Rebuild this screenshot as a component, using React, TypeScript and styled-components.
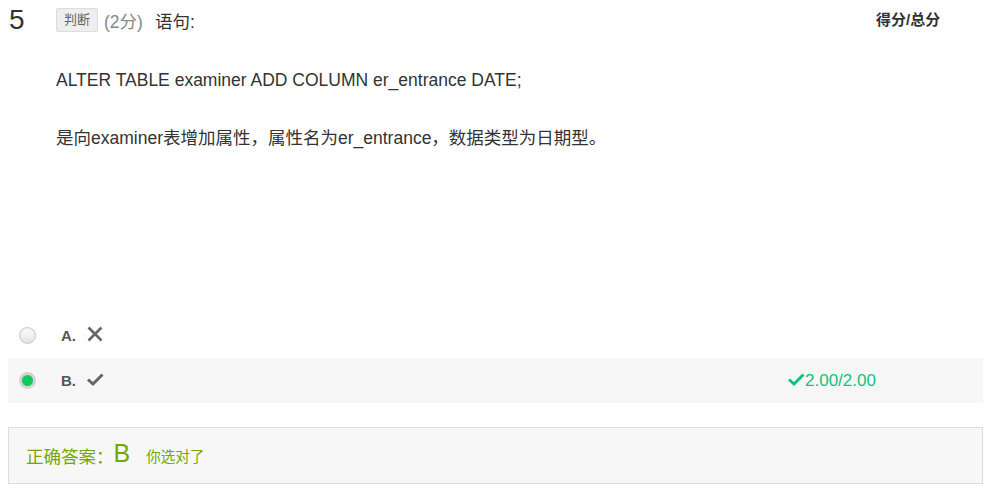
import styled, { createGlobalStyle } from 'styled-components'

const GlobalStyle = createGlobalStyle`
  body {
    margin: 0;
    background: #fff;
    font-family: "Liberation Sans", Arial, "Noto Sans CJK SC", sans-serif;
    color: #333;
  }
`

const Pagina = styled.div`
  width: 993px;
  padding: 0 10px 0 8px;
  box-sizing: border-box;
`

const Cabecalho = styled.div`
  display: flex;
  align-items: flex-start;
  height: 68px;
  padding-top: 4px;
  box-sizing: border-box;
`

const Numero = styled.div`
  width: 48px;
  padding-left: 1px;
  box-sizing: border-box;
  font-size: 28px;
  line-height: 32px;
  color: #333;
`

const Enunciado = styled.div`
  flex: 1;
  display: flex;
  align-items: center;
  height: 32px;
  font-size: 17.5px;
`

const Etiqueta = styled.span`
  display: inline-block;
  height: 24px;
  line-height: 22px;
  padding: 0 7px;
  box-sizing: border-box;
  background: #eee;
  border: 1px solid #ddd;
  border-radius: 2px;
  font-size: 13px;
  color: #666;
`

const Pontos = styled.span`
  margin-left: 6px;
  color: #888;
`

const Titulo = styled.span`
  margin-left: 12px;
  color: #333;
`

const RotuloNota = styled.div`
  width: 107px;
  font-size: 15px;
  font-weight: 700;
  line-height: 32px;
  color: #333;
`

const Corpo = styled.div`
  padding-left: 48px;
  font-size: 17.5px;
  line-height: 24px;
  color: #333;
`

const Paragrafo = styled.p`
  margin: 0 0 34px;
`

const Opcoes = styled.ul`
  list-style: none;
  margin: 163px 0 0;
  padding: 0;
`

const Opcao = styled.li<{ $marcada?: boolean }>`
  display: flex;
  align-items: center;
  height: 45px;
  padding-left: 11px;
  background: ${p => (p.$marcada ? '#f7f7f7' : 'transparent')};
`

const Radio = styled.span<{ $marcada?: boolean }>`
  width: 17px;
  height: 17px;
  border-radius: 50%;
  box-sizing: border-box;
  border: ${p => (p.$marcada ? '3px solid #d3d3d3' : '1px solid #c8c8c8')};
  background: ${p => (p.$marcada ? '#0fcb5b' : 'linear-gradient(#fff, #e2e2e2)')};
  box-shadow: ${p => (p.$marcada ? 'none' : 'inset 0 1px 2px rgba(0,0,0,0.08)')};
`

const Letra = styled.span`
  margin-left: 25px;
  width: 25px;
  font-size: 15px;
  font-weight: 700;
  color: #555;
`

const Icone = styled.svg`
  width: 18px;
  height: 18px;
  margin-top: -4px;
`

const Nota = styled.span`
  margin-left: auto;
  width: 196px;
  display: flex;
  align-items: center;
  font-size: 17px;
  color: #11c27c;
`

const CaixaResposta = styled.div`
  margin-top: 24px;
  height: 57px;
  display: flex;
  align-items: center;
  padding-left: 17px;
  background: #f7f7f7;
  border: 1px solid #ddd;
  box-sizing: border-box;
  color: #73a800;
`

const RespostaRotulo = styled.span`
  font-size: 17.5px;
`

const RespostaLetra = styled.span`
  margin: -6px 16px 0 0;
  font-size: 25px;
  line-height: 28px;
`

const RespostaMensagem = styled.span`
  font-size: 14.5px;
`

const IconeX = () => (
  <Icone viewBox="0 0 18 18">
    <path d="M2.5 2.5 L15.5 15.5 M15.5 2.5 L2.5 15.5" stroke="#666" strokeWidth="2.6" fill="none" />
  </Icone>
)

const IconeCheck = ({ cor }: { cor: string }) => (
  <Icone viewBox="0 0 18 18">
    <path d="M2 9.5 L7 14 L16.5 4.5" stroke={cor} strokeWidth="3" fill="none" />
  </Icone>
)

const App = () => {
  return (
    <Pagina>
      <GlobalStyle />
      <Cabecalho>
        <Numero>5</Numero>
        <Enunciado>
          <Etiqueta>判断</Etiqueta>
          <Pontos>(2分)</Pontos>
          <Titulo>语句:</Titulo>
        </Enunciado>
        <RotuloNota>得分/总分</RotuloNota>
      </Cabecalho>

      <Corpo>
        <Paragrafo>ALTER TABLE examiner ADD COLUMN er_entrance DATE;</Paragrafo>
        <Paragrafo>是向examiner表增加属性，属性名为er_entrance，数据类型为日期型。</Paragrafo>
      </Corpo>

      <Opcoes>
        <Opcao>
          <Radio />
          <Letra>A.</Letra>
          <IconeX />
        </Opcao>
        <Opcao $marcada>
          <Radio $marcada />
          <Letra>B.</Letra>
          <IconeCheck cor="#666" />
          <Nota>
            <IconeCheck cor="#11c27c" />
            2.00/2.00
          </Nota>
        </Opcao>
      </Opcoes>

      <CaixaResposta>
        <RespostaRotulo>正确答案：</RespostaRotulo>
        <RespostaLetra>B</RespostaLetra>
        <RespostaMensagem>你选对了</RespostaMensagem>
      </CaixaResposta>
    </Pagina>
  )
}

export default App
